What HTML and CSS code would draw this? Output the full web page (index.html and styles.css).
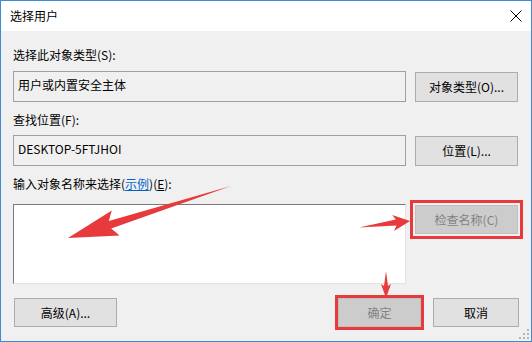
FILE: index.html
```html
<!DOCTYPE html>
<html lang="zh-CN">
<head>
<meta charset="utf-8">
<title>选择用户</title>
<link rel="stylesheet" href="styles.css">
</head>
<body>
<div class="window">
  <div class="titlebar">
    <span class="title">选择用户</span>
    <svg class="close" width="12" height="12" viewBox="0 0 12 12"><path d="M0.5 0.5L11.5 11.5M11.5 0.5L0.5 11.5" stroke="#000" stroke-width="1" fill="none"/></svg>
  </div>
  <div class="content">
    <div class="label l1">选择此对象类型(S):</div>
    <div class="row r1">
      <div class="field">用户或内置安全主体</div>
      <button class="btn">对象类型(O)...</button>
    </div>
    <div class="label l2">查找位置(F):</div>
    <div class="row r2">
      <div class="field">DESKTOP-5FTJHOI</div>
      <button class="btn">位置(L)...</button>
    </div>
    <div class="label l3">输入对象名称来选择(<span class="link">示例</span>)(<span class="ul">E</span>):</div>
    <div class="row r3">
      <div class="textarea"></div>
      <button class="btn disabled marked-out">检查名称(C)</button>
    </div>
    <div class="footer">
      <button class="btn adv">高级(A)...</button>
      <div class="spacer"></div>
      <button class="btn disabled ok marked">确定</button>
      <button class="btn cancel">取消</button>
    </div>
  </div>
  <svg class="annot" width="532" height="342" viewBox="0 0 532 342">
    <polygon fill="#e63a3c" points="231,186 111.2,228.6 119.6,235.4 68,238 111.8,210.6 108.8,221"/>
    <polygon fill="#e63a3c" points="359,227.5 396.5,225.6 394,230.9 410,221 392.2,215.1 395.8,219.6"/>
    <polygon fill="#e63a3c" points="386,271 388,286 391,284 386,298 381,284 384,286"/>
  </svg>
  <svg class="grip" width="10" height="10" viewBox="0 0 10 10">
    <g fill="#b5b5b5">
      <rect x="8" y="0" width="2" height="2"/>
      <rect x="4" y="4" width="2" height="2"/><rect x="8" y="4" width="2" height="2"/>
      <rect x="0" y="8" width="2" height="2"/><rect x="4" y="8" width="2" height="2"/><rect x="8" y="8" width="2" height="2"/>
    </g>
  </svg>
</div>
</body>
</html>
```

FILE: styles.css
```css
* { box-sizing: border-box; }
html, body { margin: 0; padding: 0; background: #f0f0f0; }
body {
  font-family: "Microsoft YaHei UI", "Noto Sans CJK SC", "Noto Sans", sans-serif;
  font-size: 12px;
  color: #000;
}
.window {
  position: relative;
  width: 532px;
  height: 342px;
  border: 1px solid #3d8ad6;
  background: #f0f0f0;
  display: flex;
  flex-direction: column;
  overflow: hidden;
}
.titlebar {
  height: 30px;
  background: #fff;
  display: flex;
  align-items: center;
  justify-content: space-between;
  padding: 0 9px 0 9px;
  flex: none;
}
.title { font-size: 12px; line-height: 16px; }
.close { display: block; margin-top: -1px; }
.content {
  flex: 1;
  display: flex;
  flex-direction: column;
  padding: 0 12px 0 12px;
}
.label { line-height: 16px; height: 16px; white-space: nowrap; }
.l1 { margin-top: 16px; }
.l2 { margin-top: 10px; }
.l3 { margin-top: 10px; }
.link { color: #0066cc; text-decoration: underline; }
.ul { text-decoration: underline; }
.row { display: flex; gap: 9px; align-items: center; }
.r1 { margin-top: 8px; }
.r2 { margin-top: 7px; }
.r3 { margin-top: 12px; align-items: flex-start; }
.field {
  width: 393px;
  height: 31px;
  border: 1px solid #a0a0a0;
  background: #f0f0f0;
  padding: 4px 4px 0 4px;
  line-height: 18px;
  white-space: nowrap;
}
.textarea {
  width: 393px;
  height: 80px;
  background: #fff;
  border-style: solid;
  border-width: 1px;
  border-color: #7a7a7a #e3e3e3 #e3e3e3 #7a7a7a;
}
.btn {
  font: inherit;
  color: #000;
  width: 103px;
  height: 30px;
  padding: 0;
  background: #e1e1e1;
  border: 1px solid #adadad;
  text-align: center;
  line-height: 28px;
  flex: none;
}
.btn.disabled {
  background: #cccccc;
  border-color: #bfbfbf;
  color: #838383;
}
.r3 .btn { margin-top: 1px; height: 29px; }
.marked-out { outline: 3px solid #e63a3c; outline-offset: 2px; }
.footer {
  display: flex;
  align-items: center;
  margin-top: 14px;
  padding-left: 1px;
}
.footer .btn { height: 29px; line-height: 27px; }
.spacer { flex: 1; }
.ok { width: 83px; margin-right: 12px; }
.marked { outline: 3px solid #e63a3c; outline-offset: 0; }
.cancel { width: 86px; }
.annot { position: absolute; left: -1px; top: -1px; pointer-events: none; }
.grip { position: absolute; right: 2px; bottom: 2px; }
```
